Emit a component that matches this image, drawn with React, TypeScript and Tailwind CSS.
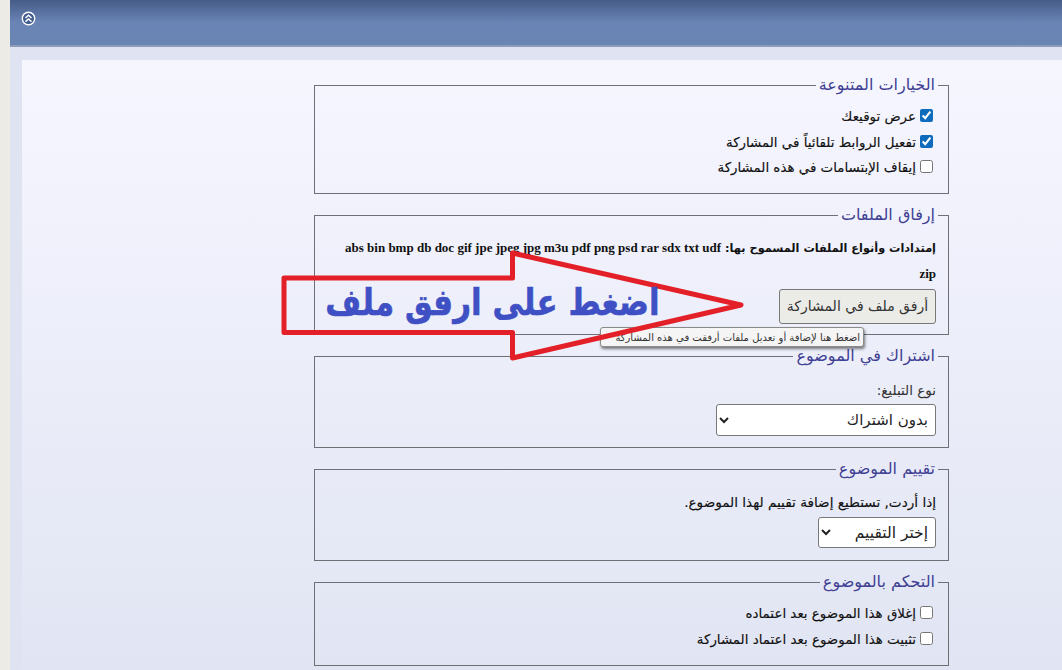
const font = { fontFamily: 'Tahoma, "DejaVu Sans", "Noto Sans", sans-serif' };

function Box({ title, h, mt, children }: { title: string; h: string; mt: string; children: React.ReactNode }) {
  return (
    <fieldset className={`border border-[#6f7076] px-[12px] pb-0 ${h} ${mt}`}>
      <legend className="-mr-[2px] px-[3px] text-[16px] leading-[20px] text-[#3f3f93]">{title}</legend>
      {children}
    </fieldset>
  );
}

function Check({ label, checked }: { label: string; checked?: boolean }) {
  return (
    <label className="flex h-[25.5px] items-center gap-[4px] pr-[3px] text-[13.4px] text-[#111] [-webkit-text-stroke:0.15px_#111]">
      <input type="checkbox" defaultChecked={checked} className="m-0 h-[13px] w-[13px] accent-[#0f6cbd]" />
      <span className="pt-[3px]">{label}</span>
    </label>
  );
}

export default function App() {
  return (
    <div dir="rtl" style={font} className="relative h-[670px] w-[1062px] overflow-hidden bg-[#ecebe6]">
      <div dir="ltr" className="ml-[10px] flex h-full flex-col">
        <div className="flex h-[47px] shrink-0 items-start border-b-[2px] border-[#8d9cb8] bg-gradient-to-b from-[#465c88] via-[#6a84b5] to-[#6a84b3] pl-[11px] pt-[11px]">
          <svg width="15" height="15" viewBox="0 0 15 15" fill="none">
            <circle cx="7.5" cy="7.5" r="6.2" fill="#3f5a8c" stroke="#fff" strokeWidth="1.4" />
            <path d="M4.5 7 7.5 4.3 10.5 7M4.5 10.6 7.5 7.9 10.5 10.6" stroke="#fff" strokeWidth="1.5" />
          </svg>
        </div>
        <div className="flex-1 bg-[#e0e4f2] pl-[12px] pt-[13px]">
          <div dir="rtl" className="h-full bg-gradient-to-b from-[#f6f6ff] to-[#e1e5f3] pr-[113px] pt-[15px]">
            <div className="w-[635px]">
              <Box title="الخيارات المتنوعة" h="h-[119px]" mt="mt-0">
                <div className="pt-[8px]">
                  <Check label="عرض توقيعك" checked />
                  <Check label="تفعيل الروابط تلقائياً في المشاركة" checked />
                  <Check label="إيقاف الإبتسامات في هذه المشاركة" />
                </div>
              </Box>
              <Box title="إرفاق الملفات" h="h-[130px]" mt="mt-[11px]">
                <p className="pt-[10px] text-[11.3px] font-bold leading-[25px] text-[#111]">
                  إمتدادات وأنواع الملفات المسموح بها:{" "}
                  <span style={{ fontFamily: '"Liberation Serif", serif' }} className="text-[13px]">
                    <bdi dir="ltr">abs bin bmp db doc gif jpe jpeg jpg m3u pdf png psd rar sdx txt udf</bdi>
                    <br />
                    zip
                  </span>
                </p>
                <button className="mt-[2px] h-[35px] w-[157px] rounded-[3px] border border-[#77787a] bg-[#ebebe8] text-[14px] text-[#333]">
                  أرفق ملف في المشاركة
                </button>
              </Box>
              <Box title="اشتراك في الموضوع" h="h-[102px]" mt="mt-[11px]">
                <div className="pt-[14px] text-[13.5px] leading-[20px] text-[#333]">نوع التبليغ:</div>
                <select className="mt-[4px] h-[32px] w-[220px] rounded-[3px] border border-[#77787a] bg-white pr-[3px] text-[15px] text-[#222]">
                  <option>بدون اشتراك</option>
                </select>
              </Box>
              <Box title="تقييم الموضوع" h="h-[102px]" mt="mt-[11px]">
                <div className="pt-[13px] text-[13.6px] leading-[20px] text-[#111] [-webkit-text-stroke:0.15px_#111]">إذا أردت, تستطيع إضافة تقييم لهذا الموضوع.</div>
                <select className="mt-[5px] h-[31px] w-[118px] rounded-[3px] border border-[#77787a] bg-white pr-[3px] text-[15.5px] text-[#222]">
                  <option>إختر التقييم</option>
                </select>
              </Box>
              <Box title="التحكم بالموضوع" h="h-[94px]" mt="mt-[11px]">
                <div className="pt-[8px]">
                  <Check label="إغلاق هذا الموضوع بعد اعتماده" />
                  <Check label="تثبيت هذا الموضوع بعد اعتماد المشاركة" />
                </div>
              </Box>
            </div>
          </div>
        </div>
      </div>

      <div className="absolute left-[600px] top-[327px] flex h-[20px] w-[264px] items-center rounded-[3px] border border-[#8a8a8a] bg-[#f5f5f5] px-[3px] text-[10px] text-[#333] shadow-[1px_2px_3px_rgba(0,0,0,0.5)]">
        اضغط هنا لإضافة أو تعديل ملفات أرفقت في هذه المشاركة
      </div>
      <svg className="absolute left-0 top-0" width="1062" height="670" fill="none">
        <path d="M284 278H512.5V253L741 305 512.5 358V332.5H284Z" stroke="#e32028" strokeWidth="5" strokeLinejoin="round" />
      </svg>
      <div className="absolute left-[325px] top-[275px] w-[335px] scale-y-[1.2] whitespace-nowrap text-center text-[31px] font-bold leading-[54px] text-[#3f50c4] [-webkit-text-stroke:0.5px_#3f50c4]">
        اضغط على ارفق ملف
      </div>
    </div>
  );
}
